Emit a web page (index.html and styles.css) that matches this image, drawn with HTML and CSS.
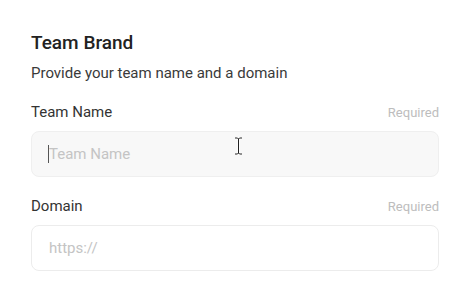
FILE: index.html
```html
<!DOCTYPE html>
<html lang="en">
<head>
    <meta charset="UTF-8">
    <meta name="viewport" content="width=device-width, initial-scale=1.0">
    <title>Team Brand</title>
    <link rel="stylesheet" href="styles.css">
</head>
<body>
    <div class="brand-form">
        <h1>Team Brand</h1>
        <p class="subtitle">Provide your team name and a domain</p>

        <div class="field">
            <div class="field-head">
                <label for="team-name">Team Name</label>
                <span class="required">Required</span>
            </div>
            <div class="input-wrap">
                <input class="input focused" id="team-name" type="text" placeholder="Team Name">
                <span class="caret"></span>
                <svg class="ibeam" width="9" height="18" viewBox="0 0 9 18">
                    <path d="M1 1h2.5l1 1 1-1H8M4.5 2v14M1 17h2.5l1-1 1 1H8" fill="none" stroke="#fff" stroke-width="2.4"/>
                    <path d="M1 1h2.5l1 1 1-1H8M4.5 2v14M1 17h2.5l1-1 1 1H8" fill="none" stroke="#222" stroke-width="1"/>
                </svg>
            </div>
        </div>

        <div class="field">
            <div class="field-head">
                <label for="domain">Domain</label>
                <span class="required">Required</span>
            </div>
            <div class="input-wrap">
                <input class="input" id="domain" type="text" placeholder="https://">
            </div>
        </div>
    </div>
</body>
</html>
```

FILE: styles.css
```css
body {
    margin: 0;
    padding: 0;
    background: #ffffff;
    font-family: Roboto, 'Noto Sans', sans-serif;
    color: #2b2b2b;
}

.brand-form {
    padding: 31px 30px 0 31px;
    display: flex;
    flex-direction: column;
}

.brand-form h1 {
    margin: 0;
    font-size: 19px;
    line-height: 24px;
    font-weight: 500;
    color: #222222;
}

.subtitle {
    margin: 8px 0 0;
    font-size: 15px;
    line-height: 20px;
    color: #3a3a3a;
}

.field {
    margin-top: 19px;
}

.field-head {
    display: flex;
    justify-content: space-between;
    align-items: baseline;
    margin-bottom: 9px;
}

.field-head label {
    font-size: 15px;
    line-height: 20px;
    color: #333333;
}

.required {
    font-size: 13px;
    color: #bdbdbd;
}

.input-wrap {
    position: relative;
}

.input {
    display: block;
    box-sizing: border-box;
    width: 100%;
    height: 46px;
    padding: 0 16px 0 17px;
    border: 1px solid #ececec;
    border-radius: 8px;
    background: #ffffff;
    font-family: inherit;
    font-size: 15px;
    color: #333333;
    outline: none;
}

.input::placeholder {
    color: #c4c4c4;
}

.input.focused {
    background: #f8f8f8;
    border-color: #efefef;
    caret-color: transparent;
}

.caret {
    position: absolute;
    left: 17px;
    top: 14px;
    width: 1px;
    height: 18px;
    background: #555555;
}

.ibeam {
    position: absolute;
    left: 203px;
    top: 6px;
}
```
